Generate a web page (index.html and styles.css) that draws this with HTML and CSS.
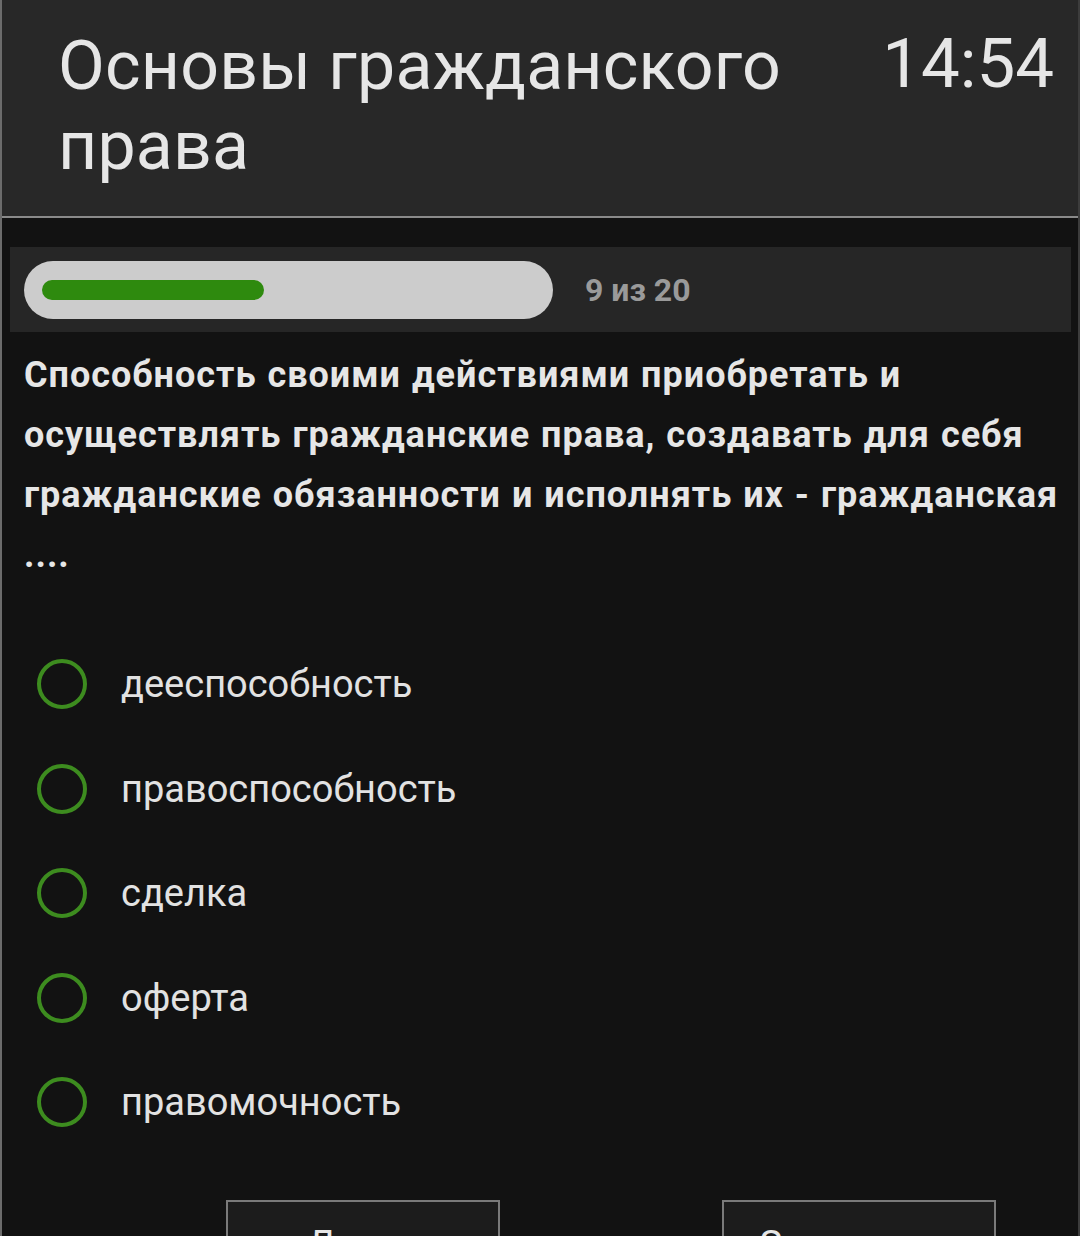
FILE: index.html
```html
<!DOCTYPE html>
<html lang="ru">
<head>
<meta charset="utf-8">
<title>Основы гражданского права</title>
<link rel="stylesheet" href="styles.css">
</head>
<body>
<div class="screen">
  <header class="header">
    <h1 class="title">Основы гражданского права</h1>
    <div class="time">14:54</div>
  </header>
  <main class="content">
    <section class="progress-panel">
      <div class="track"><div class="fill" style="width:45%"></div></div>
      <div class="counter">9 из 20</div>
    </section>
    <p class="question">Способность своими действиями приобретать и осуществлять гражданские права, создавать для себя гражданские обязанности и исполнять их - гражданская ....</p>
    <ul class="options">
      <li class="option"><span class="radio"></span><span class="label">дееспособность</span></li>
      <li class="option"><span class="radio"></span><span class="label">правоспособность</span></li>
      <li class="option"><span class="radio"></span><span class="label">сделка</span></li>
      <li class="option"><span class="radio"></span><span class="label">оферта</span></li>
      <li class="option"><span class="radio"></span><span class="label">правомочность</span></li>
    </ul>
    <div class="buttons">
      <button class="btn">Далее</button>
      <button class="btn">Завершить</button>
    </div>
  </main>
</div>
</body>
</html>
```

FILE: styles.css
```css
html, body {
  margin: 0;
  padding: 0;
  background: #121212;
  font-family: Roboto, "Noto Sans", "Liberation Sans", sans-serif;
}

.screen {
  width: 1080px;
  box-sizing: border-box;
  border-left: 2px solid #6c6c6c;
  border-right: 2px solid #3c3c3c;
  min-height: 1300px;
  background: #121212;
}

.header {
  display: flex;
  align-items: flex-start;
  height: 216px;
  box-sizing: content-box;
  background: #282828;
  border-bottom: 2px solid #8a8a8a;
  padding: 0 24px 0 56px;
}

.title {
  flex: 1;
  margin: 26px 0 0 0;
  font-size: 68px;
  font-weight: 400;
  line-height: 80px;
  color: #e6e6e6;
  letter-spacing: 0.2px;
}

.time {
  margin-top: 24px;
  font-size: 69px;
  line-height: 80px;
  color: #e6e6e6;
}

.content {
  padding: 29px 7px 0 8px;
}

.progress-panel {
  display: flex;
  align-items: center;
  height: 85px;
  background: #262626;
  padding-left: 14px;
}

.track {
  width: 529px;
  height: 58px;
  box-sizing: border-box;
  padding: 0 18px;
  border-radius: 29px;
  background: #cccccc;
  display: flex;
  align-items: center;
}

.fill {
  height: 20px;
  border-radius: 10px;
  background: #2e8a0e;
}

.counter {
  margin-left: 32px;
  font-size: 32px;
  font-weight: 700;
  color: #9a9a9a;
}

.question {
  margin: 13px 0 0 0;
  padding: 0 6px 0 14px;
  font-size: 36px;
  font-weight: 700;
  line-height: 60px;
  letter-spacing: 1px;
  word-spacing: 1px;
  color: #e6e6e6;
}

.options {
  list-style: none;
  margin: 47px 0 0 0;
  padding: 0 0 0 27px;
}

.option {
  display: flex;
  align-items: center;
  height: 104.5px;
}

.radio {
  width: 50px;
  height: 50px;
  box-sizing: border-box;
  border: 4.5px solid #3d8c1f;
  border-radius: 50%;
  flex: none;
}

.label {
  margin-left: 34px;
  font-size: 38px;
  color: #e2e2e2;
}

.buttons {
  display: flex;
  gap: 222px;
  margin-top: 45px;
  padding-left: 216px;
}

.btn {
  width: 274px;
  height: 90px;
  box-sizing: border-box;
  border: 2px solid #7a7a7a;
  background: #1c1c1c;
  color: #e6e6e6;
  font-family: Roboto, "Noto Sans", "Liberation Sans", sans-serif;
  font-size: 38px;
  padding: 0;
}
```
